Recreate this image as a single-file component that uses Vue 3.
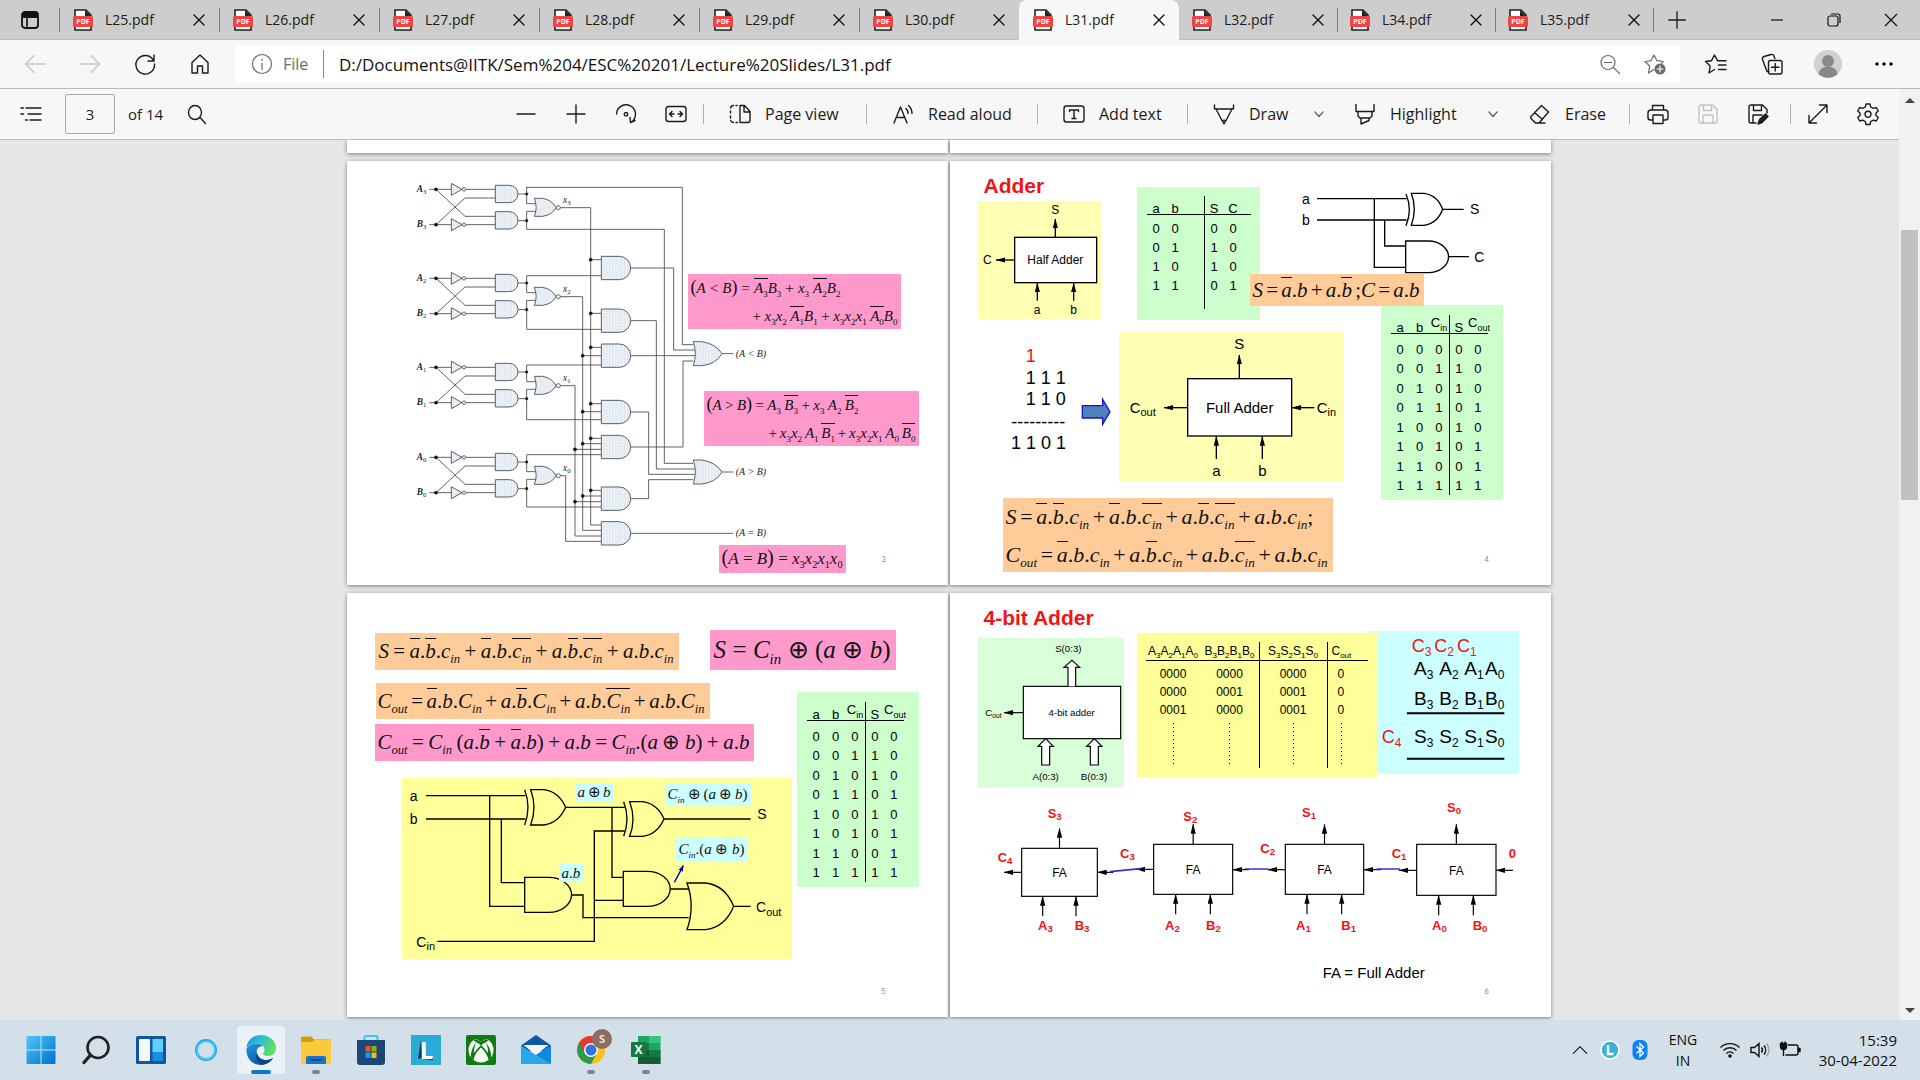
<script setup>
import { h, ref } from 'vue'

const tabs = ['L25', 'L26', 'L27', 'L28', 'L29', 'L30', 'L31', 'L32', 'L34', 'L35']
const active = ref('L31')
const address = ref('D:/Documents@IITK/Sem%204/ESC%20201/Lecture%20Slides/L31.pdf')
const page = ref('3')

const icons = {
  close: 'M7 7l10 10M17 7L7 17',
  plus: 'M12 3v18M3 12h18',
  minus: 'M3 12h18',
  back: 'M22 12H3M11 3.500L2.500 12l8.500 8.500',
  forward: 'M2 12h19M13 3.500l8.500 8.500-8.500 8.500',
  refresh: 'M20.500 8.500A9.300 9.300 0 1 0 21.500 12M21 3v6h-6',
  home: 'M4 10.500L12 3l8 7.500V21h-5.500v-7h-5v7H4z',
  info: 'M12 2.500a9.500 9.500 0 1 0 0 19a9.500 9.500 0 1 0 0-19M12 11v6.500M12 7v1.500',
  zoomOut: 'M10 3.500a7 7 0 1 0 0 14a7 7 0 1 0 0-14M15.200 15.200L21.500 21.500M6.500 10.500h7',
  favs: 'M10.500 17.500L5 21l1.200-7L1.500 9.500l6-.8L10.500 3l3 5.700h8.500M14.500 13h7.500M14.500 17.500h7.500',
  collections: 'M9 19.500H7L2.500 7.500a2.500 2.500 0 0 1 1.500-3l7-2a2.500 2.500 0 0 1 3 1.500l.8 2.500M9.500 8.500h10.500a2 2 0 0 1 2 2v9.500a2 2 0 0 1-2 2H10.500a2 2 0 0 1-2-2v-9.500a2 2 0 0 1 2-2M15.200 11.500v7.500M11.500 15.200h7.500',
  contents: 'M7 6h15M9 12h13M11 18h11M2 6h2.500M2 12h2.500M6.500 18h2',
  search: 'M10 3.500a6.500 7 0 1 0 0 14a6.500 7 0 1 0 0-14M14.800 15.200L20.500 21.500',
  rotate: 'M2.500 12A9.500 9.500 0 1 1 17.500 20M21 18.500l-4.500 2-.5-5M12 10.500a1.700 1.700 0 1 0 0 3.400a1.700 1.700 0 1 0 0-3.400',
  fit: 'M4.500 4.500h15a2.500 2.500 0 0 1 2.500 2.500v10a2.500 2.500 0 0 1-2.500 2.500h-15A2.500 2.500 0 0 1 2 17V7a2.500 2.500 0 0 1 2.500-2.500M5.500 12h4.500M14 12h4.500M8 9.500L5.500 12L8 14.500M16 9.500l2.500 2.500l-2.500 2.500',
  pageView: 'M12 3.500h4.500l5.500 6v9a2 2 0 0 1-2 2h-8zM16 4v6h6M9 3.500H8M5.500 3.500a3 3 0 0 0-2.800 2.500M2.500 9v2M2.500 14v2M2.700 18.500a3 3 0 0 0 2.800 2M8 20.500h1.500',
  aloud: 'M3 21L9.500 5L16 21M5.300 15.500h8.500M15 6.500a7 7 0 0 1 2 5M17.500 3.500a11 11 0 0 1 3.500 8',
  addText: 'M4.500 4h15A2.500 2.500 0 0 1 22 6.500v11a2.500 2.500 0 0 1-2.500 2.500h-15A2.500 2.500 0 0 1 2 17.500v-11A2.500 2.500 0 0 1 4.500 4M7.500 9.500V8h9v1.500M12 8v8.500M10 16.500h4',
  draw: 'M2.500 3v4h19V3M4 7l6 11.500h4L20 7M10 18.500l2 3.500l2-3.500',
  highlight: 'M3 2.500v7h18v-7M5 9.500v4.500l2 2h10l2-2V9.500M8 16v6l8-3.500V16',
  chevron: 'M7 9.500l5 5.500l5-5.500',
  erase: 'M13.500 3.500l7 6.500L11 21H7.500L3 16.500a1.500 1.500 0 0 1 0-2zM6.500 10.500l8 7M11 21h6',
  print: 'M6.500 8V3.500h11V8M6.500 18H4.500A2.500 2.500 0 0 1 2 15.500V11a3 3 0 0 1 3-3h14a3 3 0 0 1 3 3v4.500a2.500 2.500 0 0 1-2.500 2.500h-2M7 13h10v8.500H7z',
  save: 'M5 3h11.500L21 7.500V19a2 2 0 0 1-2 2H5a2 2 0 0 1-2-2V5a2 2 0 0 1 2-2M7.500 3v5.500h8V3M7 21v-8h10v8',
  expand: 'M3.500 20.500l17-17M13.500 3h7.500v7.500M3 13.500V21h7.500',
  gear: 'M10 2h4l.7 3l2.600 1.400l3-.9l2 3.500l-2.300 2v2.500l2.300 2l-2 3.500l-3-.9l-2.600 1.400L14 22.500h-4l-.7-3l-2.600-1.400l-3 .9l-2-3.500l2.300-2V11l-2.300-2l2-3.500l3 .9L9.300 5zM12 9.300a3 3 0 1 0 0 6a3 3 0 1 0 0-6',
  chevronUp: 'M4 16l8-8l8 8'
}
const Icon = (props) =>
  h('svg', { viewBox: '0 0 24 24', class: 'ico', 'aria-hidden': 'true' }, [h('path', { d: icons[props.name] })])
Icon.props = ['name']

/* Formula markup: ~{x} is a bar over x, _{x} a subscript, spaces part the terms. */
function parse(s) {
  const out = []
  let i = 0
  while (i < s.length) {
    if (s[i] === '~' || s[i] === '_') {
      let depth = 0
      let j = i + 1
      do {
        if (s[j] === '{') depth++
        if (s[j] === '}') depth--
        j++
      } while (depth > 0)
      out.push(h('span', { class: s[i] === '~' ? 'over' : 'sub' }, parse(s.slice(i + 2, j - 1))))
      i = j
    } else {
      const c = s[i]
      if (/[a-zA-Z]/.test(c)) out.push(h('i', c))
      else if (/[()]/.test(c)) out.push(h('span', { class: 'par' }, c))
      else out.push(c)
      i++
    }
  }
  return out
}
const Formula = (props) =>
  h('div', { class: 'math' }, props.lines.map((l) =>
    h('div', { class: 'line' }, l.split(' ').map((t) => h('span', { class: 'term' }, parse(t))))))
Formula.props = ['lines']

const truth = ['00000', '00110', '01010', '01101', '10010', '10101', '11001', '11111']
const half = ['0000', '0110', '1010', '1101']
const wide = [['0000', '0000', '0000', '0'], ['0000', '0001', '0001', '0'], ['0001', '0000', '0001', '0']]

const stages = [
  { n: 3, y: 103, top: 'M560 -6H1027V466H1060', low: 'M560 120H973V822H1060' },
  { n: 2, y: 370, top: 'M560 -8H784', low: 'M560 153H784' },
  { n: 1, y: 637, top: 'M560 -7H784', low: 'M560 157H784' },
  { n: 0, y: 907, top: 'M560 -8H784', low: 'M560 149H784' }
]
const lowEnd = { 3: 120, 2: 153, 1: 157, 0: 149 }
const ands = [339, 497, 602, 771, 876, 1031, 1135]
const dots = [
  [752, 314], [752, 475], [752, 577], [728, 602], [752, 746], [728, 770],
  [752, 850], [728, 866], [705, 883], [752, 1006], [728, 1023], [705, 1040]
]
const ors = [{ y: 596, t: '(A < B)' }, { y: 951, t: '(A > B)' }]

const sumRows = [
  { y: 202, red: true, size: 54, cells: [['C', 3, 1385], ['C', 2, 1453], ['C', 1, 1521]] },
  { y: 270, size: 57, cells: [['A', 3, 1392], ['A', 2, 1468], ['A', 1, 1543], ['A', 0, 1605]] },
  { y: 360, size: 57, cells: [['B', 3, 1392], ['B', 2, 1468], ['B', 1, 1543], ['B', 0, 1605]] },
  { y: 475, red: true, size: 54, cells: [['C', 4, 1295]] },
  { y: 475, size: 57, cells: [['S', 3, 1392], ['S', 2, 1468], ['S', 1, 1543], ['S', 0, 1605]] }
]
const adders = [
  { n: 3, x: 215, y: 790, w: 227, h: 144, s: [293, 698], c: [4, 143, 832], a: [278, 264], b: [378, 374], out: 862, inn: 862, innX: 490 },
  { n: 2, x: 611, y: 778, w: 237, h: 150, s: [700, 709], c: [3, 510, 820], a: [677, 645], b: [781, 768], out: 853, inn: 854, innX: 897 },
  { n: 1, x: 1006, y: 778, w: 235, h: 150, s: [1056, 696], c: [2, 931, 804], a: [1071, 1038], b: [1175, 1174], out: 854, inn: 854, innX: 1293 },
  { n: 0, x: 1400, y: 778, w: 238, h: 153, s: [1491, 682], c: [1, 1325, 819], a: [1466, 1446], b: [1570, 1568], out: 856, inn: 856, innX: 1689 }
]
</script>

<template>
  <div class="screen">
    <header class="tabbar">
      <button class="tab-menu" aria-label="Tab actions">
        <svg viewBox="0 0 20 20" width="20" height="20"><rect x="2" y="2" width="16" height="16" rx="3" fill="none" stroke="#111" stroke-width="1.800" /><path d="M2 3h16v5H2z" fill="#111" /><path d="M7 8v10" stroke="#111" stroke-width="1.600" /></svg>
      </button>
      <div v-for="t in tabs" :key="t" class="tab" :class="{ active: t === active }">
        <button class="tab-name" @click="active = t">
          <svg viewBox="0 0 20 22" width="20" height="22"><path d="M2 1h11l5 5v15H2z" fill="#fff" stroke="#222" stroke-width="1.600" /><path d="M12 1v6h6z" fill="#222" /><rect x="0" y="7" width="20" height="11" rx="1.500" fill="#f04343" /><text x="10" y="15.300" class="pdf-mark">PDF</text></svg>
          <span>{{ t }}.pdf</span>
        </button>
        <button class="tab-close" :aria-label="'Close ' + t"><Icon name="close" /></button>
      </div>
      <button class="new-tab" aria-label="New tab"><Icon name="plus" /></button>
      <div class="win">
        <button aria-label="Minimise"><svg viewBox="0 0 16 16" width="16" height="16"><path d="M2 8h12" /></svg></button>
        <button aria-label="Restore"><svg viewBox="0 0 16 16" width="16" height="16"><rect x="2" y="4" width="10" height="10" rx="2" /><path d="M5 2h7a2 2 0 0 1 2 2v7" /></svg></button>
        <button aria-label="Close window"><svg viewBox="0 0 16 16" width="16" height="16"><path d="M2 2l12 12M14 2L2 14" /></svg></button>
      </div>
    </header>

    <nav class="address">
      <button class="nav off" aria-label="Back"><Icon name="back" /></button>
      <button class="nav off" aria-label="Forward"><Icon name="forward" /></button>
      <button class="nav" aria-label="Refresh"><Icon name="refresh" /></button>
      <button class="nav" aria-label="Home"><Icon name="home" /></button>
      <div class="omni">
        <Icon name="info" />
        <label for="url">File</label>
        <span class="omni-sep"></span>
        <input id="url" v-model="address" type="text">
        <button class="in-omni" aria-label="Zoom"><Icon name="zoomOut" /></button>
        <button class="in-omni" aria-label="Add to favourites">
          <svg viewBox="0 0 24 24" class="ico"><path d="M11 17.500L5.500 21l1.200-7L2 9.500l6.200-.9L11 3l2.800 5.600l6.500.9l-2 2.500" /><circle cx="17" cy="17" r="5.500" fill="#6a6a6a" stroke="none" /><path d="M17 14v6M14 17h6" stroke="#fff" /></svg>
        </button>
      </div>
      <div class="nav-right">
        <button class="nav" aria-label="Favourites"><Icon name="favs" /></button>
        <button class="nav" aria-label="Collections"><Icon name="collections" /></button>
        <button class="nav" aria-label="Profile">
          <svg viewBox="0 0 28 28" width="28" height="28"><circle cx="14" cy="14" r="14" fill="#d2d0ce" /><circle cx="14" cy="11" r="6" fill="#8a8886" /><path d="M4.500 24a9.500 7.500 0 0 1 19 0a14 14 0 0 1-19 0" fill="#8a8886" /></svg>
        </button>
        <button class="nav" aria-label="Settings and more"><svg viewBox="0 0 24 24" width="24" height="24"><circle cx="5" cy="12" r="1.700" /><circle cx="12" cy="12" r="1.700" /><circle cx="19" cy="12" r="1.700" /></svg></button>
      </div>
    </nav>

    <div class="body">
      <div class="doc">
        <div class="toolbar">
          <div class="tool-left">
            <button class="tool" aria-label="Contents"><Icon name="contents" /></button>
            <input id="page-no" v-model="page" type="text">
            <label for="page-no">of 14</label>
            <button class="tool" aria-label="Find"><Icon name="search" /></button>
          </div>
          <div class="tool-right">
            <button class="tool" aria-label="Zoom out"><Icon name="minus" /></button>
            <button class="tool" aria-label="Zoom in"><Icon name="plus" /></button>
            <button class="tool" aria-label="Rotate"><Icon name="rotate" /></button>
            <button class="tool" aria-label="Fit to width"><Icon name="fit" /></button>
            <span class="sep"></span>
            <button class="labelled w-page"><Icon name="pageView" />Page view</button>
            <span class="sep"></span>
            <button class="labelled w-read"><Icon name="aloud" />Read aloud</button>
            <span class="sep"></span>
            <button class="labelled w-text"><Icon name="addText" />Add text</button>
            <span class="sep"></span>
            <button class="labelled w-draw"><Icon name="draw" />Draw</button>
            <button class="drop" aria-label="Draw options"><Icon name="chevron" /></button>
            <button class="labelled w-high"><Icon name="highlight" />Highlight</button>
            <button class="drop" aria-label="Highlight options"><Icon name="chevron" /></button>
            <button class="labelled w-erase"><Icon name="erase" />Erase</button>
            <span class="sep"></span>
            <div class="tool-end">
              <button class="tool" aria-label="Print"><Icon name="print" /></button>
              <button class="tool off" aria-label="Save"><Icon name="save" /></button>
              <button class="tool" aria-label="Save as"><svg viewBox="0 0 24 24" class="ico"><path d="M10 21H5a2 2 0 0 1-2-2V5a2 2 0 0 1 2-2h11.500L21 7.500V11M7.500 3v5.500h8V3M7 21v-8h9" /><path d="M12 22l1.500-4.500L19.500 12l2.500 2.500L16 20.500z" fill="#222" /></svg></button>
            </div>
            <span class="sep"></span>
            <button class="tool" aria-label="Full screen"><Icon name="expand" /></button>
            <button class="tool" aria-label="Settings"><Icon name="gear" /></button>
          </div>
        </div>

        <main class="viewer">
          <div class="pages">
            <div class="slide tail"></div>
            <div class="slide tail"></div>

            <section class="slide">
              <svg class="art" viewBox="21 18 1803 1272">
                <defs>
                  <pattern id="grain" width="9" height="9" patternUnits="userSpaceOnUse"><rect width="9" height="9" fill="#eef3f8" /><circle cx="2" cy="2" r="1.200" fill="#a9b6c6" /><circle cx="7" cy="6" r="1.200" fill="#a9b6c6" /></pattern>
                  <marker id="tip" markerUnits="userSpaceOnUse" markerWidth="30" markerHeight="18" refX="28" refY="8" orient="auto"><path d="M0 0L29 8L0 16z" fill="#000" /></marker>
                  <marker id="tip-blue" markerUnits="userSpaceOnUse" markerWidth="24" markerHeight="16" refX="18" refY="7" orient="auto"><path d="M0 0L20 7L0 14z" fill="#0000c8" /></marker>
                </defs>
                <g class="net">
                  <g v-for="s in stages" :key="s.n" :transform="`translate(0 ${s.y})`">
                    <path d="M268 0H334M378 0H466M268 106H334M378 106H466M288 106L375 26H466M288 0L375 81H466M534 14H560M534 94H560M560 -7V43H588M588 66H560" />
                    <path :d="`M560 66V${lowEnd[s.n]}`" />
                    <path :d="s.top" /><path :d="s.low" />
                    <path class="gate" d="M334 -18V18L366 0zM334 88V124L366 106z" />
                    <circle class="open" cx="372" cy="0" r="5" /><circle class="open" cx="372" cy="106" r="5" />
                    <circle class="dot" cx="288" cy="0" r="5" /><circle class="dot" cx="288" cy="106" r="5" />
                    <circle class="dot" cx="560" cy="14" r="4" /><circle class="dot" cx="560" cy="94" r="4" />
                    <path class="gate" d="M466 -12H508A26 26 0 0 1 508 40H466zM466 67H508A26 26 0 0 1 508 119H466z" />
                    <path class="gate" d="M583 27H608Q636 32 648 55Q636 77 608 81H583Q594 55 583 27z" />
                    <circle class="open" cx="655" cy="55" r="6" />
                    <text x="230" y="8" class="lab">A<tspan class="lsub" dy="6">{{ s.n }}</tspan></text>
                    <text x="230" y="114" class="lab">B<tspan class="lsub" dy="6">{{ s.n }}</tspan></text>
                    <text x="669" y="42" class="xlab">x<tspan class="lsub" dy="6">{{ s.n }}</tspan></text>
                  </g>
                  <path d="M661 158H752V1110H784M661 425H728V1126H784M661 692H705V1143H784M661 962H677V1159H784" />
                  <path d="M752 314H784M752 475H784M752 577H784M728 602H784M752 746H784M728 770H784M752 850H784M728 866H784M705 883H784M752 1006H784M728 1023H784M705 1040H784" />
                  <path d="M872 339H1001V585H1064M872 497H949V942H1064M872 602H1066M872 876H1029V618H1060M872 771H926V958H1064M872 1031H926V974H1060M872 1135H1180" />
                  <circle v-for="(d, i) in dots" :key="i" class="dot" :cx="d[0]" :cy="d[1]" r="5" />
                  <path v-for="y in ands" :key="y" class="gate" :d="`M784 ${y - 35}H838A34 35 0 0 1 838 ${y + 35}H784z`" />
                  <g v-for="o in ors" :key="o.y" :transform="`translate(0 ${o.y})`">
                    <path class="gate" d="M1060 -36H1085Q1127 -30 1146 0Q1127 32 1085 36H1060Q1072 0 1060 -36z" />
                    <path d="M1146 0H1180" /><text x="1187" y="9" class="out">{{ o.t }}</text>
                  </g>
                  <text x="1187" y="1144" class="out">(A = B)</text>
                </g>
                <text x="1631" y="1221" class="num">3</text>
              </svg>
              <Formula class="pink lt" :lines="['(A < B) = ~{A_{3}}B_{3} + x_{3} ~{A_{2}}B_{2}', '+ x_{3}x_{2} ~{A_{1}}B_{1} + x_{3}x_{2}x_{1} ~{A_{0}}B_{0}']" />
              <Formula class="pink gt" :lines="['(A > B) = A_{3} ~{B_{3}} + x_{3} A_{2} ~{B_{2}}', '+ x_{3}x_{2} A_{1} ~{B_{1}} + x_{3}x_{2}x_{1} A_{0} ~{B_{0}}']" />
              <Formula class="pink eq" :lines="['(A = B) = x_{3}x_{2}x_{1}x_{0}']" />
            </section>

            <section class="slide">
              <h2>Adder</h2>
              <svg class="art" viewBox="0 18 1803 1272">
                <rect x="84" y="138" width="370" height="354" fill="#ffffb3" />
                <rect x="507" y="531" width="675" height="449" fill="#ffffb3" />
                <g class="ink">
                  <rect x="194" y="247" width="246" height="136" fill="#fff" />
                  <path class="arrow" d="M316 247V192" /><path class="arrow" d="M194 315H138" />
                  <path class="arrow" d="M262 437V384" /><path class="arrow" d="M371 437V384" />
                  <rect x="713" y="671" width="312" height="172" fill="#fff" />
                  <path class="arrow" d="M868 671V600" /><path class="arrow" d="M713 758H642" />
                  <path class="arrow" d="M1093 758H1025" /><path class="arrow" d="M799 912V844" /><path class="arrow" d="M937 912V844" />
                  <path d="M1101 131H1370M1101 195H1370M1273 131V337H1367M1304 195V273H1367M1478 163H1541M1495 305H1557" />
                  <path d="M1368 117Q1388 163 1368 212" />
                  <path d="M1384 115H1422Q1462 120 1478 163Q1462 206 1422 211H1384Q1402 163 1384 115z" fill="#fff" />
                  <path d="M1367 258H1435A60 47 0 0 1 1435 353H1367z" fill="#fff" />
                </g>
                <path d="M397 752H458V733L480 770L458 808V789H397z" fill="#4f81bd" stroke="#1414d2" stroke-width="4" />
                <g class="mid t36"><text x="316" y="177">S</text><text x="112" y="327">C</text><text x="316" y="327">Half Adder</text><text x="261" y="477">a</text><text x="371" y="477">b</text></g>
                <g class="mid t45"><text x="868" y="583">S</text><text x="869" y="774">Full Adder</text><text x="799" y="964">a</text><text x="937" y="964">b</text></g>
                <g class="t45"><text x="539" y="774">C<tspan class="s33" dy="9">out</tspan></text><text x="1100" y="774">C<tspan class="s33" dy="9">in</tspan></text></g>
                <g class="t42"><text x="1056" y="147">a</text><text x="1056" y="210">b</text><text x="1560" y="177">S</text><text x="1573" y="321">C</text></g>
                <g class="t54"><text x="227" y="620" class="red">1</text><text x="227" y="687">1 1 1</text><text x="227" y="750">1 1 0</text><text x="184" y="819">---------</text><text x="183" y="882">1 1 0 1</text></g>
                <text x="1610" y="1221" class="num">4</text>
              </svg>
              <table class="truth half">
                <thead><tr><th>a</th><th>b</th><th></th><th>S</th><th>C</th><th></th></tr></thead>
                <tbody>
                  <tr v-for="r in half" :key="r"><td>{{ r[0] }}</td><td>{{ r[1] }}</td><td></td><td>{{ r[2] }}</td><td>{{ r[3] }}</td><td></td></tr>
                  <tr class="foot"><td></td><td></td><td></td><td></td><td></td><td></td></tr>
                </tbody>
              </table>
              <table class="truth full at-4">
                <thead><tr><th>a</th><th>b</th><th class="up">C<sub>in</sub></th><th>S</th><th class="up">C<sub>out</sub></th></tr></thead>
                <tbody><tr v-for="r in truth" :key="r"><td v-for="(c, i) in r" :key="i">{{ c }}</td></tr></tbody>
              </table>
              <Formula class="orange hf" :lines="['S = ~{a}.b + a.~{b} ;C = a.b']" />
              <Formula class="orange big" :lines="['S = ~{a}.~{b}.c_{in} + ~{a}.b.~{c_{in}} + a.~{b}.~{c_{in}} + a.b.c_{in};', 'C_{out} = ~{a}.b.c_{in} + a.~{b}.c_{in} + a.b.~{c_{in}} + a.b.c_{in}']" />
            </section>

            <section class="slide">
              <svg class="art" viewBox="21 24 1803 1272">
                <rect x="186" y="579" width="1170" height="543" fill="#ffff99" />
                <g class="ink">
                  <path d="M258 632H556M258 702H556M449 632V964H554M484 702V893H554M677 667H854M816 667V877H850M694 930H729V998H1046M292 1069H763V738H854M763 946H850M972 702H1232M991 912H1046M1181 964H1232" />
                  <path d="M554 614Q574 667 554 720M851 650Q871 702 851 754" />
                  <path d="M572 614H612Q656 620 677 667Q656 714 612 720H572Q592 667 572 614zM869 650H908Q952 656 972 702Q952 748 908 754H869Q889 702 869 650z" />
                  <path d="M554 877H626A68 52 0 0 1 626 982H554zM850 859H922A68 52 0 0 1 922 964H850z" />
                  <path d="M1041 894H1096Q1155 900 1181 964Q1155 1028 1096 1034H1041Q1066 964 1041 894z" />
                </g>
                <path d="M1003 892L1030 842" stroke="#0000c8" stroke-width="4" marker-end="url(#tip-blue)" />
                <g class="t42"><text x="209" y="647">a</text><text x="209" y="716">b</text><text x="1252" y="701">S</text><text x="1248" y="981">C<tspan class="s33" dy="11">out</tspan></text><text x="229" y="1085">C<tspan class="s33" dy="10">in</tspan></text></g>
                <text x="1630" y="1226" class="num">5</text>
              </svg>
              <table class="truth full at-5">
                <thead><tr><th>a</th><th>b</th><th class="up">C<sub>in</sub></th><th>S</th><th class="up">C<sub>out</sub></th></tr></thead>
                <tbody><tr v-for="r in truth" :key="r"><td v-for="(c, i) in r" :key="i">{{ c }}</td></tr></tbody>
              </table>
              <Formula class="orange sum" :lines="['S = ~{a}.~{b}.c_{in} + ~{a}.b.~{c_{in}} + a.~{b}.~{c_{in}} + a.b.c_{in}']" />
              <Formula class="pink xor" :lines="['S = C_{in} ⊕ (a ⊕ b)']" />
              <Formula class="orange carry" :lines="['C_{out} = ~{a}.b.C_{in} + a.~{b}.C_{in} + a.b.~{C_{in}} + a.b.C_{in}']" />
              <Formula class="pink carry2" :lines="['C_{out} = C_{in} (a.~{b} + ~{a}.b) + a.b = C_{in}.(a ⊕ b) + a.b']" />
              <Formula class="cyan ab" :lines="['a ⊕ b']" />
              <Formula class="cyan cab" :lines="['C_{in} ⊕ (a ⊕ b)']" />
              <Formula class="cyan cdot" :lines="['C_{in}.(a ⊕ b)']" />
              <Formula class="cyan dotab" :lines="['a.b']" />
            </section>

            <section class="slide">
              <h2>4-bit Adder</h2>
              <svg class="art" viewBox="0 24 1803 1272">
                <rect x="84" y="159" width="438" height="449" fill="#d9ffd9" />
                <rect x="1258" y="138" width="449" height="429" fill="#ccffff" />
                <g class="ink thin">
                  <rect x="220" y="304" width="292" height="157" fill="#fff" />
                  <path class="arrow" d="M220 383H162" />
                  <path fill="#fff" d="M354 304V247H342L366 226L389 247H377V304M275 540V484H264L287 461L310 484H299V540zM421 540V484H410L433 461L456 484H445V540z" />
                </g>
                <g class="t29"><g class="mid"><text x="355" y="200">S(0:3)</text><text x="365" y="393">4-bit adder</text><text x="287" y="585">A(0:3)</text><text x="432" y="585">B(0:3)</text></g><text x="106" y="393">C<tspan class="s20" dy="6">out</tspan></text></g>
                <g v-for="(r, i) in sumRows" :key="i" :class="{ red: r.red }" :font-size="r.size">
                  <text v-for="c in r.cells" :key="c[2]" :x="c[2]" :y="r.y">{{ c[0] }}<tspan class="s36" dy="12">{{ c[1] }}</tspan></text>
                </g>
                <path d="M1371 385H1663M1371 521H1663" stroke="#000" stroke-width="6" />
                <g v-for="f in adders" :key="f.n">
                  <g class="ink thin">
                    <rect :x="f.x" :y="f.y" :width="f.w" :height="f.h" fill="#fff" />
                    <path class="arrow" :d="`M${f.x + f.w / 2} ${f.y}V${f.y - 60}`" />
                    <path class="arrow" :d="`M${f.x} ${f.out}H${f.x - 53}`" />
                    <path class="arrow" :d="`M${f.innX} ${f.inn}H${f.x + f.w}`" />
                    <path class="arrow" :d="`M${f.a[0]} ${f.y + f.h + 60}V${f.y + f.h}`" />
                    <path class="arrow" :d="`M${f.b[0]} ${f.y + f.h + 60}V${f.y + f.h}`" />
                  </g>
                  <text class="fa" :x="f.x + f.w / 2" :y="f.y + f.h / 2 + 14">FA</text>
                  <g class="tag">
                    <text :x="f.s[0]" :y="f.s[1]">S<tspan class="s29" dy="6">{{ f.n }}</tspan></text>
                    <text :x="f.c[1]" :y="f.c[2]">C<tspan class="s29" dy="6">{{ f.c[0] }}</tspan></text>
                    <text :x="f.a[1]" y="1036">A<tspan class="s29" dy="6">{{ f.n }}</tspan></text>
                    <text :x="f.b[1]" y="1036">B<tspan class="s29" dy="6">{{ f.n }}</tspan></text>
                  </g>
                </g>
                <text x="1676" y="820" class="tag">0</text>
                <path d="M480 860L572 851M885 852H955M1280 852H1350" stroke="#3333dd" stroke-width="5" />
                <text x="1118" y="1179" class="t45">FA = Full Adder</text>
                <text x="1610" y="1226" class="num">6</text>
              </svg>
              <table class="wide">
                <thead><tr><th>A<sub>3</sub>A<sub>2</sub>A<sub>1</sub>A<sub>0</sub></th><th>B<sub>3</sub>B<sub>2</sub>B<sub>1</sub>B<sub>0</sub></th><th>S<sub>3</sub>S<sub>2</sub>S<sub>1</sub>S<sub>0</sub></th><th>C<sub>out</sub></th></tr></thead>
                <tbody>
                  <tr v-for="(r, i) in wide" :key="i"><td v-for="(c, j) in r" :key="j">{{ c }}</td></tr>
                  <tr class="more"><td v-for="n in 4" :key="n"><span></span></td></tr>
                </tbody>
              </table>
            </section>
          </div>
        </main>
      </div>
      <div class="scroll"><span class="tri-up"></span><span class="thumb"></span><span class="tri-down"></span></div>
    </div>

    <footer class="taskbar">
      <div class="apps">
        <button aria-label="Start"><svg viewBox="0 0 30 30"><defs><linearGradient id="win" x1="0" y1="0" x2="1" y2="1"><stop offset="0" stop-color="#4cc8f5" /><stop offset="1" stop-color="#0070d0" /></linearGradient></defs><path d="M0.500 2a1 1 0 0 1 1-1H14.500V14.500H.5zM15.500 1H28.500a1 1 0 0 1 1 1V14.500h-14zM.5 15.500h14V29h-13a1 1 0 0 1-1-1zM15.500 15.500h14V28a1 1 0 0 1-1 1h-13z" fill="url(#win)" /></svg></button>
        <button aria-label="Search"><svg viewBox="0 0 30 30"><circle cx="17" cy="12.500" r="10.500" fill="none" stroke="#222" stroke-width="2.600" /><path d="M9.500 20L3 27.500" stroke="#222" stroke-width="3.400" stroke-linecap="round" /></svg></button>
        <button aria-label="Widgets"><svg viewBox="0 0 30 30"><rect y="1" width="30" height="28" rx="1.500" fill="#1256a0" /><rect x="3" y="4" width="11" height="22" rx="1" fill="#f4f8fc" /><rect x="16.500" y="4" width="10.500" height="13" fill="#66d0fa" /><rect x="16.500" y="17" width="10.500" height="9" fill="#1a8ee0" /></svg></button>
        <button aria-label="Cortana"><svg viewBox="0 0 30 30"><circle cx="15" cy="15" r="9.500" fill="none" stroke="#22a7e8" stroke-width="3" /><circle cx="15" cy="15" r="9" fill="none" stroke="#5bd6f7" stroke-width="1.200" /></svg></button>
        <button aria-label="Edge" class="on"><svg viewBox="0 0 30 30"><defs><linearGradient id="e1" x1="0" y1="0" x2="1" y2=".4"><stop offset="0" stop-color="#1c93d8" /><stop offset=".5" stop-color="#2cc0d4" /><stop offset="1" stop-color="#62e05c" /></linearGradient><linearGradient id="e2" x1="0" y1="0" x2=".6" y2="1"><stop offset="0" stop-color="#1b9de2" /><stop offset="1" stop-color="#0d4f9e" /></linearGradient></defs><path d="M.5 13C1 5.500 7 0 15 0c9 0 15 6.500 15 13c0 5-3.500 8-8 8c-4 0-5.500-1.800-5-2.800c1-1 1.500-2 1.500-3.700c0-3-3-6-8-6C5.500 8.500 2 11 .5 13z" fill="url(#e1)" /><path d="M.4 14C2 10.500 5.500 8.500 10.500 8.500c3 0 5 1 6.500 2.500C12 11 10 15 11 18.500C12.500 24 19 27.500 27 23c-2.500 4.500-7.500 7-12 7C6 30 0 23 .4 14z" fill="url(#e2)" /><path d="M11 18.500C12.500 24 19 27.500 27 23c-2 3.500-6 6-9 6C12 29 8.500 23 11 18.500z" fill="#0c4487" /></svg><i class="run wide-run"></i></button>
        <button aria-label="File Explorer"><svg viewBox="0 0 30 30"><path d="M0 3a1.500 1.500 0 0 1 1.500-1.500H10L13 4.500H29A1 1 0 0 1 30 5.500V10H0z" fill="#d69a10" /><path d="M0 7h11l2.500-2H29a1 1 0 0 1 1 1v22a1 1 0 0 1-1 1H1a1 1 0 0 1-1-1z" fill="#fcc93a" /><path d="M5 29v-6a2 2 0 0 1 2-2h16a2 2 0 0 1 2 2v6z" fill="#1a74c8" /><rect x="9" y="24" width="12" height="2" rx="1" fill="#0c4c94" /></svg><i class="run"></i></button>
        <button aria-label="Store"><svg viewBox="0 0 30 30"><path d="M8.500 6V2.500A1.500 1.500 0 0 1 10 1h10a1.500 1.500 0 0 1 1.500 1.500V6" fill="none" stroke="#3cc6f4" stroke-width="2" /><path d="M1 5h28v22a3 3 0 0 1-3 3H4a3 3 0 0 1-3-3z" fill="#1b4676" /><path d="M9.500 11h5v5.500h-5z" fill="#f25022" /><path d="M15.500 11h5v5.500h-5z" fill="#7fba00" /><path d="M9.500 17.500h5V23h-5z" fill="#00a4ef" /><path d="M15.500 17.500h5V23h-5z" fill="#ffb900" /></svg></button>
        <button aria-label="Lens"><svg viewBox="0 0 30 30"><rect width="30" height="30" fill="#29acd6" /><path d="M10 5L7 24l4-1zM11 24l11 1v-3z" fill="#10384f" /><text x="15.500" y="23.500" class="ell">L</text></svg></button>
        <button aria-label="Xbox"><svg viewBox="0 0 30 30"><rect width="30" height="30" rx="2" fill="#107c10" /><circle cx="15" cy="15" r="12.500" fill="#fff" /><path d="M6.500 4.500Q10 3.500 15 6.500Q20 3.500 23.500 4.500L21 1.500H9z" fill="#107c10" /><path d="M10.500 7.500Q12.500 8 15 10.500Q17.500 8 19.500 7.500L23.500 4.500Q19.500 4 15 6.500Q10.500 4 6.500 4.500z" fill="#107c10" /><path d="M10.500 7Q4.500 14 4.800 22.500L7.500 25Q9 18 15 12.500Q21 18 22.500 25L25.200 22.500Q25.500 14 19.500 7Q22.500 13 21.800 18Q19 13.500 15 10Q11 13.500 8.200 18Q7.500 13 10.500 7z" fill="#107c10" /></svg></button>
        <button aria-label="Mail"><svg viewBox="0 0 30 30"><path d="M0 10.500L15 0l15 10.500V16H0z" fill="#0c58a8" /><path d="M0 10.500L15 20L30 10.500V29H0z" fill="#28a8ea" /><path d="M2.500 10h25L15 20z" fill="#f4f6f8" /><path d="M15 20L30 29V10.500z" fill="#1488dc" /></svg></button>
        <button aria-label="Chrome" class="chrome"><svg viewBox="0 0 30 30"><circle cx="15" cy="15" r="14" fill="#f9bf14" /><path d="M15 15L2.900 8A14 14 0 0 1 27.100 8z" fill="#e33b2e" /><path d="M15 15L2.900 8A14 14 0 0 0 15 29L21 18z" fill="#2a9b48" /><path d="M15 8h12.100A14 14 0 0 0 2.900 8L9 18z" fill="#e33b2e" /><circle cx="15" cy="15" r="7" fill="#fff" /><circle cx="15" cy="15" r="5.500" fill="#2f74e0" /></svg><b>S</b><i class="run"></i></button>
        <button aria-label="Excel"><svg viewBox="0 0 30 30"><path d="M7 1h22.500v28H7z" fill="#21a366" /><path d="M18 1h11.500v7H18z" fill="#33c481" /><path d="M7 8h11v7H7z" fill="#107c41" /><path d="M7 15h11v14H7z" fill="#185c37" /><path d="M18 15h11.500v7H18z" fill="#107c41" /><path d="M18 22h11.500v7H18z" fill="#185c37" /><rect x="0" y="7" width="15" height="15" rx="1" fill="#107c41" /><text x="7.500" y="19" class="ex">X</text></svg><i class="run"></i></button>
      </div>
      <div class="tray">
        <button aria-label="Hidden icons"><Icon name="chevronUp" /></button>
        <button aria-label="Lens"><svg viewBox="0 0 20 20" width="20" height="20"><circle cx="10" cy="10" r="9" fill="#3fb1d3" stroke="#fff" stroke-width="1.600" /><path d="M8 5v9h5.500" fill="none" stroke="#fff" stroke-width="2.400" /></svg></button>
        <button aria-label="Bluetooth"><svg viewBox="0 0 20 20" width="20" height="20"><rect x="2.500" width="15" height="20" rx="6" fill="#0a84f0" /><path d="M6.500 6.500l7 6.500L10 16.500v-13L13.500 7l-7 6.500" fill="none" stroke="#fff" stroke-width="1.300" /></svg></button>
        <button class="lang"><span>ENG</span><span>IN</span></button>
        <button aria-label="Network"><svg viewBox="0 0 22 20" width="22" height="20" class="line-ico"><path d="M1.500 7.500a13.500 13.500 0 0 1 19 0M4.500 10.500a9.200 9.200 0 0 1 13 0M7.500 13.500a5 5 0 0 1 7 0" /><circle cx="11" cy="16" r="1.800" fill="#111" stroke="none" /></svg></button>
        <button aria-label="Volume"><svg viewBox="0 0 22 20" width="22" height="20" class="line-ico"><path d="M2 7.500h3.500L10 3.500v13l-4.500-4H2zM12.500 7.500a4 4 0 0 1 0 5M15 5.500a7 7 0 0 1 0 9" /><path d="M17.500 3.500a10 10 0 0 1 0 13" stroke="#9aa6b0" /></svg></button>
        <button aria-label="Battery"><svg viewBox="0 0 22 20" width="22" height="20" class="line-ico"><path d="M9 5h8a2 2 0 0 1 2 2v6a2 2 0 0 1-2 2H7.500a2 2 0 0 1-1-.4" /><path d="M19.500 8.500h1.500v3h-1.500zM1.500 3.500h6v3a3 3 0 0 1-6 0zM3 1.500v2M6 1.500v2" fill="#111" /><path d="M4.500 9v7" /></svg></button>
        <button class="clock"><span>15:39</span><span>30-04-2022</span></button>
      </div>
    </footer>
  </div>
</template>

<style>
body { margin: 0; }
</style>

<style scoped>
.screen { height: 100vh; display: flex; flex-direction: column; overflow: hidden; font-family: "Open Sans", "Noto Sans", sans-serif; color: #1b1b1b; background: #e6e6e6; }
button { border: 0; padding: 0; margin: 0; background: none; font: inherit; color: inherit; display: flex; align-items: center; justify-content: center; flex: none; }
.ico { width: 24px; height: 24px; flex: none; fill: none; stroke: currentColor; stroke-width: 1.4; stroke-linejoin: round; stroke-linecap: round; }

.tabbar { height: 40px; flex: none; display: flex; background: #cdcdcd; box-shadow: inset 0 -1px #bdbdbd; }
.tab-menu { width: 59px; }
.tab { width: 160px; flex: none; display: flex; align-items: center; justify-content: space-between; position: relative; box-sizing: border-box; padding: 0 8px 0 14px; }
.tab.active { background: #f7f7f7; border-radius: 8px 8px 0 0; }
.tab.active ~ .tab { width: 158px; padding: 0 7px 0 13px; }
.tab:not(.active)::before { content: ""; position: absolute; left: 0; top: 8px; height: 24px; width: 1px; background: #7d7d7d; }
.tab.active + .tab::before { display: none; }
.tab-name { gap: 12px; font-size: 14px; line-height: 20px; }
.tab-close .ico { color: #111; }
.pdf-mark { font: bold 7px "Open Sans", sans-serif; fill: #fff; text-anchor: middle; }
.new-tab { width: 46px; border-left: 1px solid #7d7d7d; height: 24px; margin-top: 8px; }
.new-tab .ico { width: 22px; height: 22px; }
.win { margin-left: auto; display: flex; padding-right: 1px; }
.win button { width: 57px; }
.win svg { fill: none; stroke: #111; stroke-width: 1.2; }

.address { height: 48px; flex: none; display: flex; align-items: center; padding-left: 7px; background: #f7f7f7; border-bottom: 1px solid #bababa; }
.nav { width: 55px; height: 40px; }
.nav.off { color: #c8c8c8; }
.omni { flex: 1; height: 38px; margin-left: 8px; background: #fff; border-radius: 5px; display: flex; align-items: center; padding: 0 13px 0 15px; font-size: 16px; color: #6a6a6a; }
.omni .ico { stroke-width: 1.2; }
.omni label { margin-left: 9px; width: 40px; }
.omni-sep { width: 1px; height: 28px; background: #8a8a8a; }
.omni input { flex: 1; border: 0; outline: 0; padding: 0 0 0 15px; font: inherit; font-size: 17px; color: #111; background: none; }
.in-omni { width: 24px; margin-left: 21px; }
.nav-right { display: flex; padding: 0 8px 0 8px; }
.nav-right .nav { width: 56px; }

.body { flex: 1; min-height: 0; display: flex; }
.doc { flex: 1; min-width: 0; display: flex; flex-direction: column; }
.scroll { width: 21px; flex: none; background: #f1f1f1; display: flex; flex-direction: column; align-items: center; box-sizing: border-box; padding: 9px 0 7px; }
.tri-up, .tri-down { width: 0; height: 0; border: 5px solid transparent; }
.tri-up { border-top: 0; border-bottom-color: #444; }
.tri-down { border-bottom: 0; border-top-color: #444; margin-top: auto; }
.thumb { width: 17px; height: 270px; margin-top: 127px; background: #c1c1c1; }

.toolbar { height: 50px; flex: none; display: flex; align-items: center; justify-content: space-between; background: #f7f7f7; border-bottom: 1px solid #bababa; font-size: 16px; }
.tool-left, .tool-right, .tool-end { display: flex; align-items: center; }
.tool-left { padding-left: 6px; }
.tool-left input { width: 50px; height: 40px; box-sizing: border-box; margin-left: 9px; border: 1px solid #aaa; border-radius: 2px; background: #f7f7f7; text-align: center; font: inherit; font-size: 15px; color: #222; }
.tool-left label { margin: 0 9px 0 13px; font-size: 15px; }
.tool { width: 50px; height: 40px; }
.tool.off { color: #c2c2c2; }
.sep { width: 1px; height: 20px; background: #b0b0b0; margin: 0 2px; }
.labelled { height: 40px; justify-content: flex-start; gap: 13px; padding-left: 22px; box-sizing: border-box; }
.w-page { width: 158px; }
.w-read { width: 166px; }
.w-text { width: 145px; }
.w-draw { width: 111px; }
.drop { width: 36px; height: 40px; color: #555; }
.drop .ico { width: 20px; height: 20px; }
.w-high { width: 138px; padding-left: 16px; }
.w-erase { width: 116px; padding-left: 17px; }
.tool-end { padding: 0 5px 0 1px; }
.tool-right { padding-right: 6px; }

.viewer { flex: 1; min-height: 0; overflow: hidden; background: #e6e6e6; }
.pages { display: grid; grid-template-columns: 601px 601px; gap: 8px 2px; justify-content: center; padding-right: 2px; }
.slide { position: relative; height: 424px; background: #fff; box-shadow: 0 1px 4px rgba(0, 0, 0, 0.45); font-family: "Liberation Sans", Arial, sans-serif; color: #000; }
.slide.tail { height: 13px; }
.slide h2 { position: absolute; left: 34px; top: 13px; margin: 0; font-size: 21px; line-height: 24px; color: #f01414; }
.art { position: absolute; inset: 0; width: 100%; height: 100%; font-family: "Liberation Sans", Arial, sans-serif; }

.net path, .net circle { fill: none; stroke: #4a4a4a; stroke-width: 2.6; }
.net .gate { fill: url(#grain); stroke: #56606c; stroke-width: 3; }
.net .open { fill: #fff; }
.net .dot { fill: #111; stroke: #111; stroke-width: 1; }
.lab, .xlab, .out { font-family: "Liberation Serif", serif; font-style: italic; font-size: 28px; fill: #222; }
.lab { font-weight: bold; }
.out { font-size: 30px; }
.lsub { font-size: 20px; font-style: normal; font-weight: normal; }
.num { font-family: Lato, sans-serif; font-size: 24px; fill: #8c8c8c; text-anchor: middle; }
.ink { fill: none; stroke: #000; stroke-width: 4; }
.thin { stroke-width: 3.5; }
.arrow { marker-end: url(#tip); }
.mid { text-anchor: middle; }
.t29 { font-size: 29px; }
.t36 { font-size: 36px; }
.t42 { font-size: 42px; }
.t45 { font-size: 45px; }
.t54 { font-size: 54px; }
.s20 { font-size: 20px; }
.s29 { font-size: 29px; }
.s33 { font-size: 33px; }
.s36 { font-size: 36px; }
.red { fill: #f01414; }
.tag { font-size: 39px; font-weight: bold; fill: #f01414; }
.fa { font-size: 36px; text-anchor: middle; }

.math { position: absolute; box-sizing: border-box; font-family: "Liberation Serif", "Times New Roman", serif; color: #111; }
.math :deep(.line) { display: flex; justify-content: space-between; white-space: nowrap; }
.math :deep(.over) { display: inline-block; border-top: 1px solid #111; line-height: 1.2; }
.math :deep(.sub) { font-size: 0.6em; vertical-align: -0.4em; line-height: 0; }
.pink { background: #ff99cc; }
.orange { background: #ffcc99; }
.cyan { background: #ccffff; }
.lt, .gt { height: 55px; font-size: 15px; line-height: 28px; }
.lt :deep(.par), .gt :deep(.par), .eq :deep(.par) { font-size: 1.2em; line-height: 1; }
.lt { left: 341px; top: 113px; width: 213px; padding: 0 3px; }
.gt { left: 357px; top: 230px; width: 215px; padding: 0 3px; }
.lt :deep(.line:first-child), .gt :deep(.line:first-child) { margin-right: 57px; }
.lt :deep(.line:last-child), .gt :deep(.line:last-child) { margin-left: 62px; }
.eq { left: 372px; top: 384px; width: 127px; padding: 0 3px; font-size: 17px; line-height: 28px; }
.hf { left: 300px; top: 113px; width: 174px; padding: 0 4px 0 3px; font-size: 21px; line-height: 32px; }
.big { left: 53px; top: 337px; width: 330px; height: 74px; padding: 0 5px 0 3px; font-size: 22px; line-height: 38px; }
.big :deep(.line:first-child) { margin-right: 14px; }
.sum { left: 28px; top: 40px; width: 304px; padding: 0 5px 0 4px; font-size: 21px; line-height: 37px; }
.xor { left: 363px; top: 37px; width: 186px; padding: 0 5px 0 4px; font-size: 25px; line-height: 40px; }
.carry { left: 29px; top: 90px; width: 334px; padding: 0 5px 0 2px; font-size: 21px; line-height: 36px; }
.carry2 { left: 28px; top: 131px; width: 379px; padding: 0 4px 0 3px; font-size: 21px; line-height: 37px; }
.ab { left: 228px; top: 190px; width: 39px; padding: 0 3px; font-size: 15px; line-height: 18px; }
.cab { left: 318px; top: 190px; width: 86px; padding: 0 3px; font-size: 15px; line-height: 23px; }
.cdot { left: 329px; top: 244px; width: 72px; padding: 0 3px; font-size: 15px; line-height: 24px; }
.dotab { left: 212px; top: 271px; width: 25px; padding: 0 3px; font-size: 15px; line-height: 18px; }

table { position: absolute; box-sizing: border-box; border-collapse: separate; border-spacing: 0; table-layout: fixed; }
th, td { padding: 0; font-weight: normal; text-align: center; white-space: nowrap; }
sub { line-height: 0; vertical-align: -4px; }
.truth { background: #ccffcc; font-size: 13px; line-height: 15px; }
.truth th { height: 18px; vertical-align: bottom; border-bottom: 1px solid #000; line-height: 10px; }
.truth sub { font-size: 9px; }
.full { width: 122px; padding: 10px 15px 5px 10px; }
.full th.up { vertical-align: top; line-height: 16px; }
.full td { height: 19px; }
.full tbody tr:nth-child(odd) td { height: 20px; }
.full tbody tr:first-child td { height: 25px; vertical-align: bottom; line-height: 18px; }
.full th:nth-child(4), .full td:nth-child(4) { border-left: 1px solid #000; }
.full.at-4 { left: 431px; top: 144px; }
.full.at-5 { left: 450px; top: 99px; }
.half { left: 187px; top: 26px; width: 123px; padding: 9px 9px 11px 10px; }
.half th { width: 19px; }
.half th:nth-child(6) { width: 8px; }
.half td { height: 19px; }
.half tbody tr:first-child td { height: 23px; vertical-align: bottom; line-height: 18px; }
.half .foot td { height: 14px; }
.half th:nth-child(4), .half td:nth-child(4) { border-left: 1px solid #000; }

.wide { left: 187px; top: 40px; width: 240px; padding: 9px; font-size: 12px; line-height: 18px; background: #ffff99; }
.wide sub { font-size: 8px; vertical-align: -3px; }
.wide th { height: 18px; border-bottom: 1px solid #000; line-height: 18px; }
.wide td { height: 18px; }
.wide tbody tr:first-child td { height: 22px; vertical-align: bottom; }
.wide th:nth-child(1) { width: 55px; }
.wide th:nth-child(2) { width: 58px; }
.wide th:nth-child(3) { width: 67px; }
.wide th:nth-child(n + 3), .wide td:nth-child(n + 3) { border-left: 1px solid #000; }
.wide th:nth-child(4), .wide td:nth-child(4) { text-align: left; padding-left: 4px; }
.wide td:nth-child(4) { padding-left: 10px; }
.wide .more td { height: 49px; vertical-align: middle; }
.more span { display: inline-block; width: 1px; height: 42px; margin: 0 3px; background: repeating-linear-gradient(#000 0 1px, transparent 1px 4px); vertical-align: top; }

.taskbar { height: 60px; flex: none; display: flex; justify-content: space-between; align-items: center; background: #d3dfe9; padding: 0 23px 0 17px; }
.apps { display: flex; gap: 7px; }
.apps button { width: 48px; height: 48px; position: relative; }
.apps svg { width: 30px; height: 30px; }
.apps .on { background: #eaf1f7; border-radius: 4px; }
.run { position: absolute; bottom: 0; left: 20px; width: 8px; height: 4px; border-radius: 2px; background: #7b858e; }
.wide-run { left: 14px; width: 20px; background: #0a78d4; }
.ell { font: bold 24px "Open Sans", sans-serif; fill: #fff; text-anchor: middle; }
.ex { font: bold 12px "Open Sans", sans-serif; fill: #fff; text-anchor: middle; }
.chrome b { position: absolute; right: 3px; top: 3px; width: 20px; height: 20px; border-radius: 50%; background: #8d6e63; color: #e8e0dc; font-size: 11px; line-height: 20px; }
.tray { display: flex; align-items: center; }
.tray button { width: 30px; height: 40px; }
.tray .ico { width: 20px; height: 20px; }
.line-ico { fill: none; stroke: #111; stroke-width: 1.4; }
.tray .lang, .tray .clock { flex-direction: column; font-size: 14px; line-height: 21px; color: #111; height: 42px; }
.tray .lang { width: 56px; margin-right: 4px; }
.tray .clock { width: 92px; align-items: flex-end; font-size: 15px; line-height: 20px; }
</style>
